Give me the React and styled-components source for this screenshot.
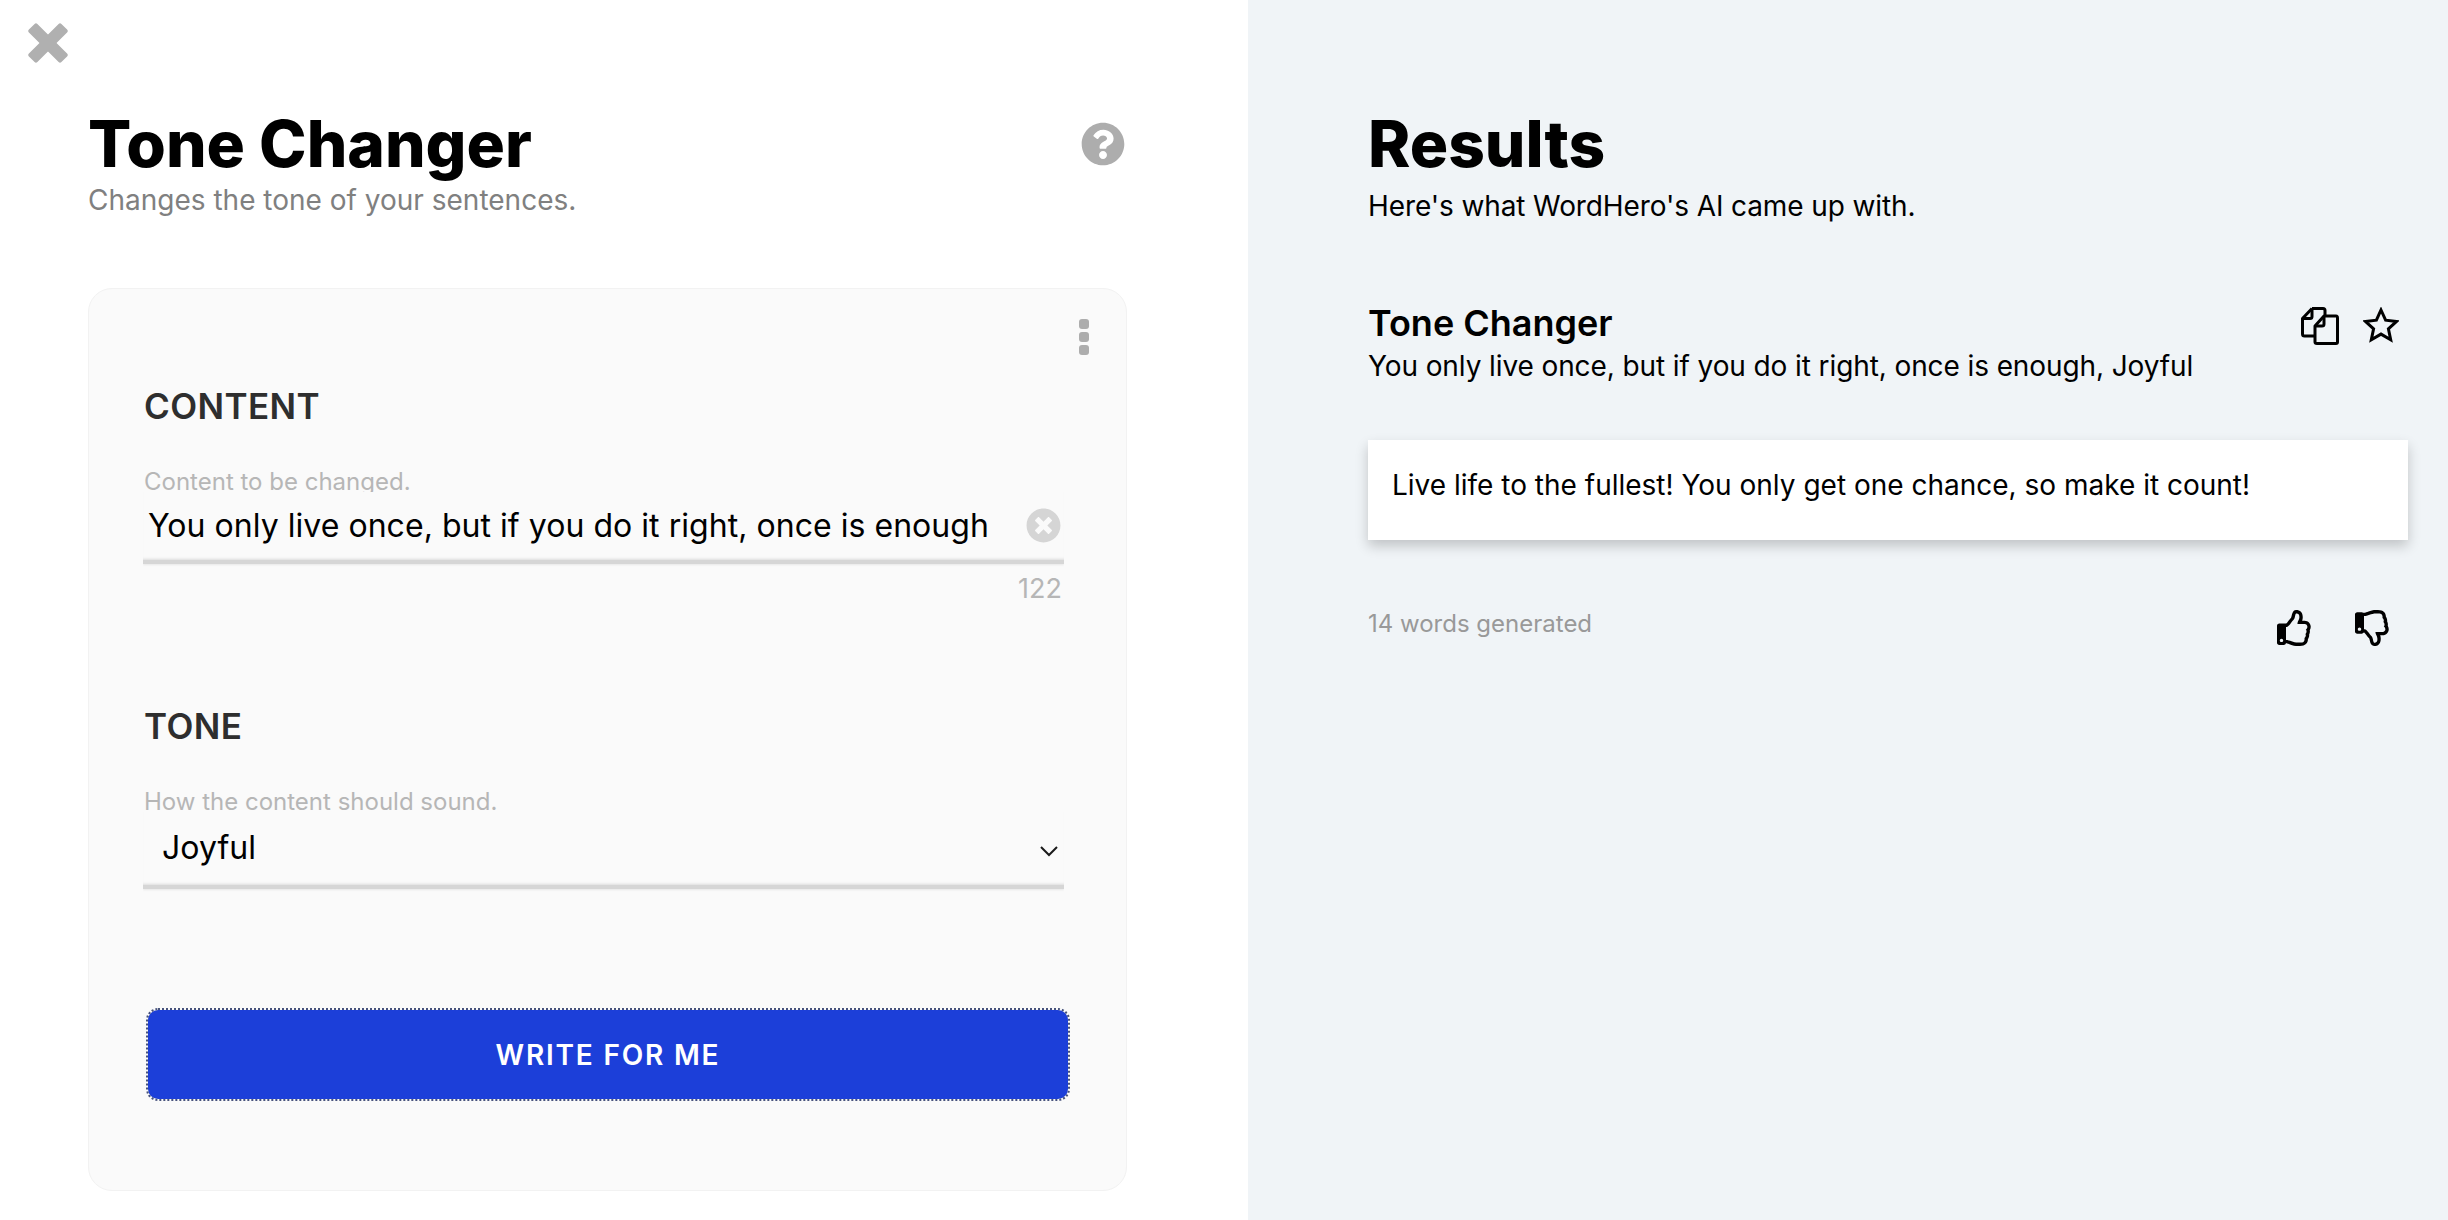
import React from "react";
import styled, { createGlobalStyle } from "styled-components";
import { FaQuestionCircle, FaTimesCircle, FaRegThumbsUp, FaRegThumbsDown } from "react-icons/fa";

const Global = createGlobalStyle`
  html, body {
    margin: 0;
    padding: 0;
    background: #fff;
    font-family: Inter, "Liberation Sans", sans-serif;
  }
  * { box-sizing: border-box; }
`;

const Page = styled.div`
  display: flex;
  width: 2448px;
  height: 1220px;
  overflow: hidden;
`;

const LeftPane = styled.section`
  width: 1248px;
  height: 100%;
  padding: 23px 121px 0 88px;
  background: #fff;
`;

const RightPane = styled.section`
  flex: 1;
  height: 100%;
  padding: 112px 40px 0 120px;
  background: #f0f4f7;
`;

const CloseButton = styled.div`
  width: 40px;
  height: 40px;
  margin-left: -60px;
  line-height: 0;
`;

const Header = styled.div`
  display: flex;
  justify-content: space-between;
  align-items: flex-start;
  margin-top: 49px;
  height: 176px;
`;

const BigTitle = styled.h1`
  margin: 0;
  font-size: 64px;
  line-height: 64px;
  font-weight: 800;
  color: #000;
`;

const Sub = styled.p`
  margin: ${(p) => p.$top || 0}px 0 0;
  font-size: 28px;
  line-height: 32px;
  letter-spacing: ${(p) => p.$spacing || 0}px;
  color: ${(p) => p.$color || "#808080"};
`;

const HelpIcon = styled.div`
  color: #adadad;
  font-size: 44px;
  line-height: 0;
  margin: 10px 2px 0 0;
`;

const FormCard = styled.div`
  position: relative;
  height: 903px;
  padding: 0 41px 0 55px;
  background: #fafafa;
  border: 1px solid #f2f2f2;
  border-radius: 24px;
`;

const Dots = styled.div`
  position: absolute;
  top: 30px;
  right: 37px;
  display: flex;
  flex-direction: column;
  gap: 3px;
`;

const Dot = styled.span`
  width: 10px;
  height: 10px;
  border-radius: 3px;
  background: #adadad;
`;

const SectionTitle = styled.h2`
  margin: ${(p) => p.$top}px 0 0;
  font-size: 35px;
  line-height: 42px;
  font-weight: 600;
  letter-spacing: 0.4px;
  color: #2e2e2e;
`;

const FieldLabel = styled.div`
  margin-top: 41px;
  height: 24px;
  overflow: hidden;
  font-size: 24px;
  line-height: 28px;
  color: #b6b6b6;
`;

const FieldRow = styled.div`
  display: flex;
  align-items: center;
  justify-content: space-between;
  height: ${(p) => p.$height}px;
  padding: 0 ${(p) => p.$right}px ${(p) => p.$bottom}px ${(p) => p.$left}px;
  width: 921px;
  margin-left: -1px;
  border-bottom: 4px solid #d6d6d6;
  box-shadow: inset 0 -3px 3px -2px rgba(0, 0, 0, 0.12), 0 1px 2px rgba(0, 0, 0, 0.08);
  clip-path: inset(0 0 -6px 0);
  font-size: 32px;
  letter-spacing: 0.04px;
  color: #000;
`;

const ClearIcon = styled.div`
  color: #d5d5d5;
  font-size: 35px;
  line-height: 0;
`;

const ChevronWrap = styled.div`
  margin-top: 8px;
  line-height: 0;
`;

const Counter = styled.div`
  width: 918px;
  margin-top: 9px;
  text-align: right;
  font-size: 27px;
  line-height: 32px;
  color: #b6b6b6;
`;

const WriteButton = styled.button`
  display: block;
  width: 924px;
  height: 93px;
  margin: 119px 0 0 2px;
  border: 2px dotted #46527c;
  border-radius: 12px;
  background: #1c3fd9;
  background-clip: padding-box;
  color: #fff;
  font-family: inherit;
  font-size: 28px;
  font-weight: 600;
  letter-spacing: 1.8px;
`;

const ResultHead = styled.div`
  display: flex;
  justify-content: space-between;
  margin-top: 79px;
  padding-right: 9px;
`;

const ResultName = styled.h3`
  margin: 0;
  font-size: 36px;
  line-height: 44px;
  font-weight: 600;
  color: #000;
`;

const IconRow = styled.div`
  display: flex;
  gap: ${(p) => p.$gap}px;
  padding: ${(p) => p.$top}px ${(p) => p.$right}px 0 0;
  color: #000;
  line-height: 0;
`;

const ResultBox = styled.div`
  height: 100px;
  margin-top: 58px;
  padding: 27px 24px 0;
  background: #fff;
  box-shadow: 0 6px 12px rgba(0, 0, 0, 0.2);
  font-size: 28px;
  line-height: 36px;
  color: #000;
`;

const Footer = styled.div`
  display: flex;
  justify-content: space-between;
  align-items: flex-start;
  margin-top: 68px;
`;

const WordCount = styled.span`
  font-size: 24px;
  line-height: 32px;
  color: #999;
`;

const CloseIcon = () => (
  <svg width="40" height="40" viewBox="0 0 40 40" fill="#b0b0b0">
    <g transform="rotate(45 20 20)">
      <rect x="-3" y="14" width="46" height="12" rx="2" />
      <rect x="14" y="-3" width="12" height="46" rx="2" />
    </g>
  </svg>
);

const CopyIcon = () => (
  <svg width="38" height="38" viewBox="0 0 38 38" fill="none" stroke="#000" strokeWidth="3" strokeLinejoin="round">
    <path d="M11 1.500h11q2 0 2 2V9M11 1.500L1.500 11.500V27q0 2 2 2H14" />
    <path d="M11 1.500V9.500q0 2-2 2H1.500" />
    <path d="M23 9h12q1.500 0 1.500 2v24q0 1.500-1.500 1.500H16q-2 0-2-1.500V19z" fill="#f0f4f7" />
    <path d="M23 9v8q0 2-2 2h-7" />
  </svg>
);

const StarIcon = () => (
  <svg width="36" height="36" viewBox="0 0 36 36" fill="none" stroke="#000" strokeWidth="3" strokeLinejoin="miter">
    <path d="M18 3l4.600 10.200 11 1.200-8.200 7.400 2.300 10.900L18 27.100 8.300 32.700l2.300-10.900L2.400 14.400l11-1.200z" />
  </svg>
);

const Chevron = () => (
  <svg width="20" height="12" viewBox="0 0 20 12" fill="none" stroke="#1a1a1a" strokeWidth="2">
    <path d="M2 2l8 8 8-8" />
  </svg>
);

export default function App() {
  return (
    <Page>
      <Global />
      <LeftPane>
        <CloseButton>
          <CloseIcon />
        </CloseButton>
        <Header>
          <div>
            <BigTitle>Tone Changer</BigTitle>
            <Sub $top={8}>Changes the tone of your sentences.</Sub>
          </div>
          <HelpIcon>
            <FaQuestionCircle />
          </HelpIcon>
        </Header>
        <FormCard>
          <Dots>
            <Dot />
            <Dot />
            <Dot />
          </Dots>
          <SectionTitle $top={96}>CONTENT</SectionTitle>
          <FieldLabel>Content to be changed.</FieldLabel>
          <FieldRow $height={72} $bottom={1} $left={5} $right={3}>
            You only live once, but if you do it right, once is enough
            <ClearIcon>
              <FaTimesCircle />
            </ClearIcon>
          </FieldRow>
          <Counter>122</Counter>
          <SectionTitle $top={100}>TONE</SectionTitle>
          <FieldLabel>How the content should sound.</FieldLabel>
          <FieldRow $height={77} $bottom={3} $left={19} $right={5}>
            Joyful
            <ChevronWrap>
              <Chevron />
            </ChevronWrap>
          </FieldRow>
          <WriteButton>WRITE FOR ME</WriteButton>
        </FormCard>
      </LeftPane>
      <RightPane>
        <BigTitle>Results</BigTitle>
        <Sub $top={14} $spacing={-0.11} $color="#000">Here's what WordHero's AI came up with.</Sub>
        <ResultHead>
          <div>
            <ResultName>Tone Changer</ResultName>
            <Sub $top={5} $spacing={-0.1} $color="#000">You only live once, but if you do it right, once is enough, Joyful</Sub>
          </div>
          <IconRow $gap={24} $top={6} $right={0}>
            <CopyIcon />
            <StarIcon />
          </IconRow>
        </ResultHead>
        <ResultBox>Live life to the fullest! You only get one chance, so make it count!</ResultBox>
        <Footer>
          <WordCount>14 words generated</WordCount>
          <IconRow $gap={42} $top={2} $right={17}>
            <FaRegThumbsUp size={36} />
            <FaRegThumbsDown size={36} />
          </IconRow>
        </Footer>
      </RightPane>
    </Page>
  );
}
